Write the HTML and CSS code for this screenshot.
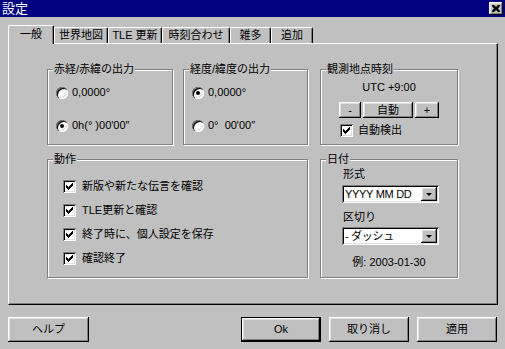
FILE: index.html
```html
<!DOCTYPE html>
<html>
  <head>
    <meta charset="utf-8">
    <title>設定</title>
    <link rel="stylesheet" href="styles.css">
  </head>
  <body>

    <div class="titlebar">
        <span class="title">設定</span>
        <span class="close">
            <svg width="8" height="7" viewBox="0 0 8 7"><path d="M0 0h2l2 2 2-2h2v1l-2 2.5 2 2.5v1h-2l-2-2-2 2h-2v-1l2-2.5-2-2.5z" fill="#000"/></svg>
        </span>
    </div>

    <div class="tabs">
        <div class="tab active">一般</div>
        <div class="tab">世界地図</div>
        <div class="tab">TLE 更新</div>
        <div class="tab">時刻合わせ</div>
        <div class="tab">雑多</div>
        <div class="tab">追加</div>
    </div>

    <div class="panel">
        <div class="grid">

            <!-- 赤経/赤緯 -->
            <div class="group">
                <span class="group-title">赤経/赤緯の出力</span>
                <div class="options">
                    <div class="row"><span class="radio"></span><span>0,0000°</span></div>
                    <div class="row"><span class="radio on"></span><span>0h(°&nbsp;)00'00″</span></div>
                </div>
            </div>

            <!-- 経度/緯度 -->
            <div class="group">
                <span class="group-title">経度/緯度の出力</span>
                <div class="options">
                    <div class="row"><span class="radio on"></span><span>0,0000°</span></div>
                    <div class="row"><span class="radio"></span><span>0°&nbsp;&nbsp;00'00″</span></div>
                </div>
            </div>

            <!-- 観測地点時刻 -->
            <div class="group group-time">
                <span class="group-title">観測地点時刻</span>
                <div class="utc">UTC +9:00</div>
                <div class="offset-buttons">
                    <div class="btn btn-minus">-</div>
                    <div class="btn btn-auto">自動</div>
                    <div class="btn btn-plus">+</div>
                </div>
                <div class="row auto-detect">
                    <span class="check"><svg width="7" height="7" viewBox="0 0 7 7"><path d="M6 0h1v3h-1v1h-1v1h-1v1h-1v1h-1v-1h-1v-1h-1v-3h1v1h1v1h1v-1h1v-1h1v-1h1z" fill="#000"/></svg></span>
                    <span>自動検出</span>
                </div>
            </div>

            <!-- 動作 -->
            <div class="group group-action">
                <span class="group-title">動作</span>
                <div class="checks">
                    <div class="row"><span class="check"><svg width="7" height="7" viewBox="0 0 7 7"><path d="M6 0h1v3h-1v1h-1v1h-1v1h-1v1h-1v-1h-1v-1h-1v-3h1v1h1v1h1v-1h1v-1h1v-1h1z" fill="#000"/></svg></span><span>新版や新たな伝言を確認</span></div>
                    <div class="row"><span class="check"><svg width="7" height="7" viewBox="0 0 7 7"><path d="M6 0h1v3h-1v1h-1v1h-1v1h-1v1h-1v-1h-1v-1h-1v-3h1v1h1v1h1v-1h1v-1h1v-1h1z" fill="#000"/></svg></span><span>TLE更新と確認</span></div>
                    <div class="row"><span class="check"><svg width="7" height="7" viewBox="0 0 7 7"><path d="M6 0h1v3h-1v1h-1v1h-1v1h-1v1h-1v-1h-1v-1h-1v-3h1v1h1v1h1v-1h1v-1h1v-1h1z" fill="#000"/></svg></span><span>終了時に、個人設定を保存</span></div>
                    <div class="row"><span class="check"><svg width="7" height="7" viewBox="0 0 7 7"><path d="M6 0h1v3h-1v1h-1v1h-1v1h-1v1h-1v-1h-1v-1h-1v-3h1v1h1v1h1v-1h1v-1h1v-1h1z" fill="#000"/></svg></span><span>確認終了</span></div>
                </div>
            </div>

            <!-- 日付 -->
            <div class="group group-date">
                <span class="group-title">日付</span>
                <div class="field-label">形式</div>
                <div class="combo"><span class="combo-text">YYYY MM DD</span><span class="combo-btn"><i class="arrow"></i></span></div>
                <div class="field-label second">区切り</div>
                <div class="combo"><span class="combo-text">- ダッシュ</span><span class="combo-btn"><i class="arrow"></i></span></div>
                <div class="example">例: 2003-01-30</div>
            </div>

        </div>
    </div>

    <div class="buttons">
        <div class="btn btn-help">ヘルプ</div>
        <div class="btn btn-ok">Ok</div>
        <div class="btn">取り消し</div>
        <div class="btn">適用</div>
    </div>

  </body>
</html>
```

FILE: styles.css
```css
* {
    box-sizing: border-box;
}

html, body {
    padding: 0;
    margin: 0;
}

body {
    width: 505px;
    height: 349px;
    overflow: hidden;
    background: #c0c0c0;
    color: #000;
    font-family: "Liberation Sans", "Noto Sans CJK JP", sans-serif;
    font-size: 11px;
    line-height: 13px;
}

/* title bar */
.titlebar {
    height: 17px;
    background: #000080;
    color: #fff;
    display: flex;
    align-items: center;
    justify-content: space-between;
    padding: 0 2px;
}

.title {
    font-size: 13px;
    line-height: 17px;
}

.close {
    width: 14px;
    height: 13px;
    display: flex;
    align-items: center;
    justify-content: center;
    background: #c0c0c0;
    box-shadow: inset -1px -1px #000, inset 1px 1px #fff, inset -2px -2px #808080, inset 2px 2px #dfdfdf;
}

/* tabs */
.tabs {
    display: flex;
    align-items: flex-end;
    height: 18px;
    margin-top: 8px;
    padding-left: 8px;
    position: relative;
    z-index: 1;
}

.tab {
    height: 16px;
    text-align: center;
    line-height: 15px;
    background: #c0c0c0;
    border-top: 1px solid #fff;
    border-left: 1px solid #fff;
    border-right: 1px solid #000;
    border-radius: 2px 2px 0 0;
    box-shadow: inset -1px 0 #808080;
}

.tab:nth-child(1) { width: 46px; }
.tab:nth-child(2) { width: 54px; }
.tab:nth-child(3) { width: 54px; }
.tab:nth-child(4) { width: 68px; }
.tab:nth-child(5) { width: 41px; }
.tab:nth-child(6) { width: 42px; }

.tab.active {
    height: 19px;
    margin-bottom: -1px;
    line-height: 17px;
}

/* panel */
.panel {
    height: 262px;
    margin: 0 7px 0 8px;
    padding: 25px 0 0 38px;
    border-top: 1px solid #fff;
    border-left: 1px solid #fff;
    border-right: 1px solid #000;
    border-bottom: 1px solid #000;
    box-shadow: inset -1px -1px #808080;
}

.grid {
    display: grid;
    grid-template-columns: 126px 125px 140px;
    grid-template-rows: 76px 119px;
    column-gap: 10px;
    row-gap: 14px;
}

.group {
    position: relative;
    border: 1px solid #808080;
    box-shadow: inset 1px 1px #fff, 1px 1px #fff;
}

.group-title {
    position: absolute;
    top: -7px;
    left: 5px;
    padding: 0 1px;
    background: #c0c0c0;
}

.group-time,
.group-date {
    margin-left: 2px;
}

.group-action {
    grid-column: 1 / 3;
}

.row {
    display: flex;
    align-items: center;
    height: 13px;
}

.options {
    display: flex;
    flex-direction: column;
    gap: 20px;
    padding: 16px 0 0 8px;
}

.options .row {
    gap: 4px;
}

.radio {
    width: 12px;
    height: 12px;
    border-radius: 50%;
    background: #fff;
    box-shadow: inset 1px 1px #808080, inset 2px 2px #000, inset -1px -1px #fff, inset -2px -2px #dfdfdf;
    position: relative;
}

.radio.on::after {
    content: "";
    position: absolute;
    left: 4px;
    top: 4px;
    width: 4px;
    height: 4px;
    border-radius: 50%;
    background: #000;
}

.check {
    width: 13px;
    height: 13px;
    flex: none;
    display: flex;
    align-items: center;
    justify-content: center;
    background: #fff;
    box-shadow: inset 1px 1px #808080, inset -1px -1px #fff, inset 2px 2px #000, inset -2px -2px #dfdfdf;
}

/* time group */
.utc {
    text-align: center;
    margin-top: 11px;
}

.offset-buttons {
    display: flex;
    justify-content: center;
    gap: 2px;
    margin-top: 8px;
}

.offset-buttons .btn {
    height: 16px;
    line-height: 16px;
}

.btn-minus { width: 22px; }
.btn-auto { width: 50px; }
.btn-plus { width: 24px; }

.auto-detect {
    gap: 5px;
    margin: 6px 0 0 19px;
}

/* action group */
.checks {
    display: flex;
    flex-direction: column;
    gap: 11px;
    padding: 20px 0 0 15px;
}

.checks .row {
    gap: 6px;
}

/* date group */
.group-date {
    padding: 8px 0 0 21px;
}

.field-label {
    padding-left: 1px;
    margin-bottom: 4px;
}

.field-label.second {
    margin-top: 8px;
    margin-bottom: 3px;
}

.combo {
    width: 97px;
    height: 18px;
    display: flex;
    align-items: center;
    justify-content: space-between;
    padding: 2px;
    background: #fff;
    box-shadow: inset 1px 1px #808080, inset -1px -1px #fff, inset 2px 2px #000, inset -2px -2px #dfdfdf;
}

.combo-text {
    padding-left: 1px;
    letter-spacing: -0.3px;
}

.combo-btn {
    width: 16px;
    height: 14px;
    display: flex;
    align-items: center;
    justify-content: center;
    background: #c0c0c0;
    box-shadow: inset -1px -1px #000, inset 1px 1px #fff, inset -2px -2px #808080, inset 2px 2px #dfdfdf;
}

.arrow {
    width: 0;
    height: 0;
    border-left: 3px solid transparent;
    border-right: 3px solid transparent;
    border-top: 3px solid #000;
}

.example {
    margin: 11px 0 0 -21px;
    text-align: center;
}

/* buttons */
.btn {
    background: #c0c0c0;
    text-align: center;
    box-shadow: inset -1px -1px #000, inset 1px 1px #fff, inset -2px -2px #808080, inset 2px 2px #dfdfdf;
}

.buttons {
    display: flex;
    gap: 8px;
    margin-top: 12px;
    padding: 0 8px;
}

.buttons .btn {
    width: 80px;
    height: 25px;
    line-height: 25px;
}

.buttons .btn-help {
    width: 81px;
    margin-right: auto;
}

.buttons .btn-ok {
    border: 1px solid #000;
    line-height: 23px;
}
```
